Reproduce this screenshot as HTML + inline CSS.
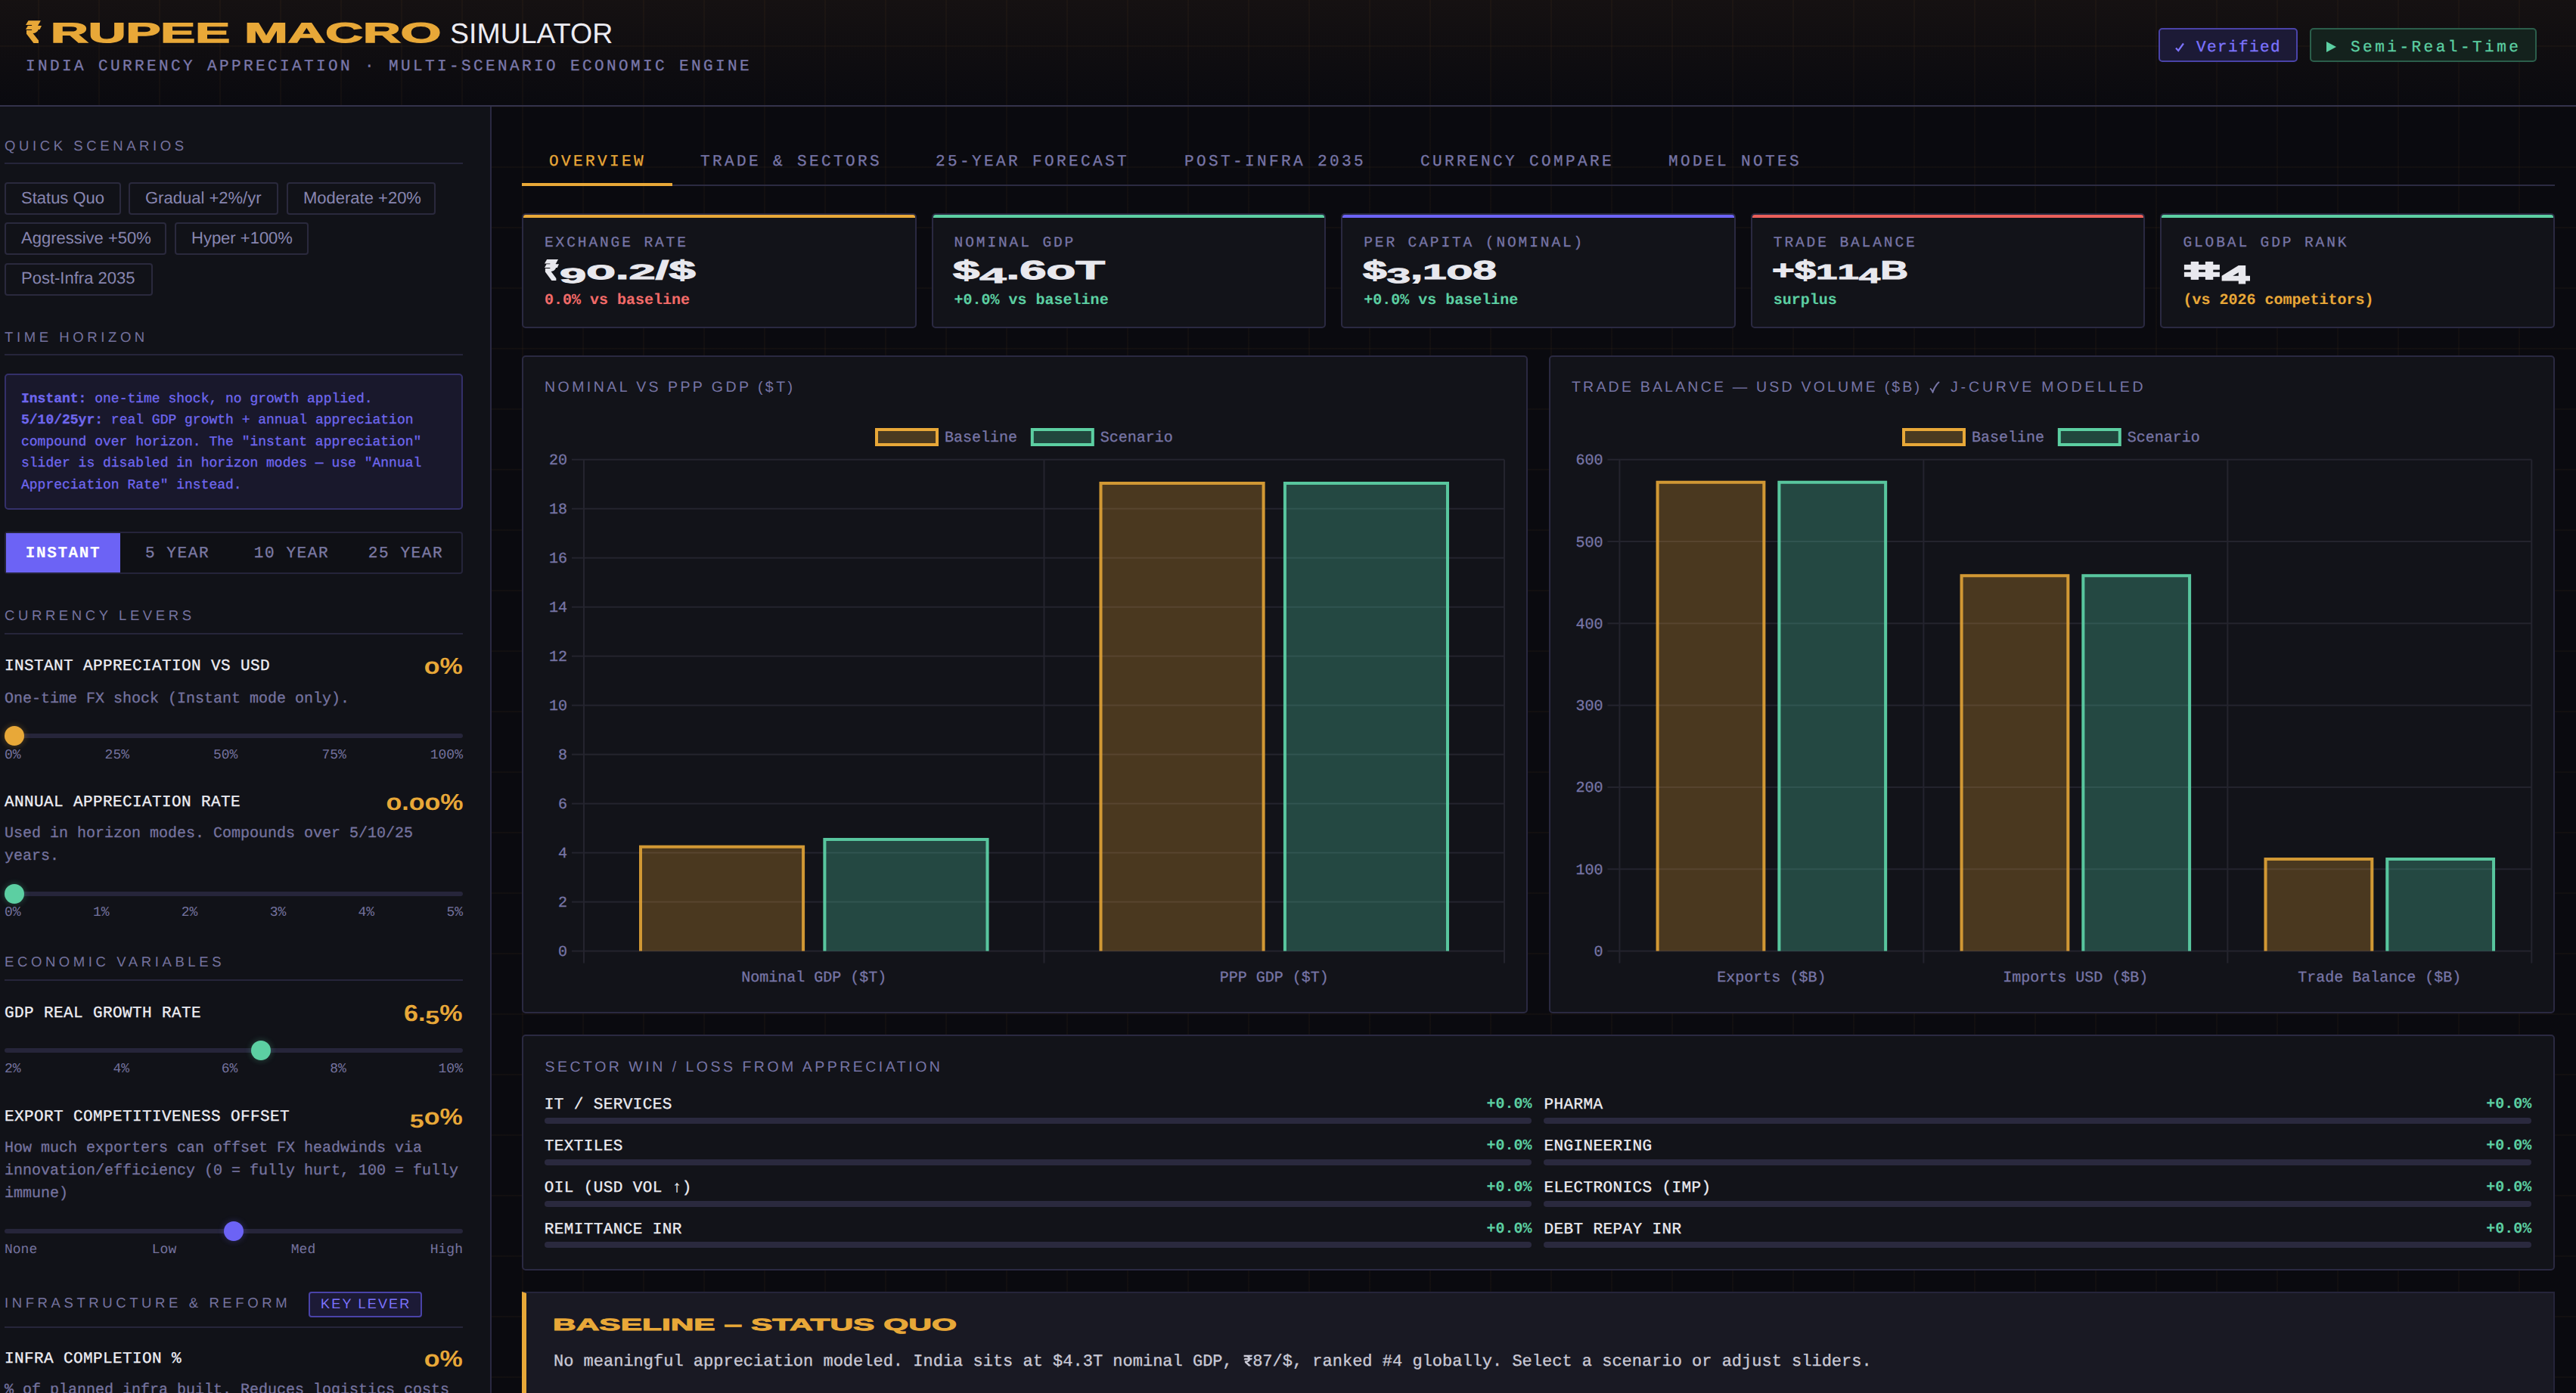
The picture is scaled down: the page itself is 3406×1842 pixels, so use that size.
<!DOCTYPE html>
<html><head><meta charset="utf-8">
<style>
*{box-sizing:border-box;margin:0;padding:0}
html,body{width:3406px;height:1842px;overflow:hidden;text-rendering:geometricPrecision}
body{position:relative;background:#0a0a0f;font-family:"Liberation Mono",monospace;color:#e8e8f0;
background-image:linear-gradient(rgba(232,150,70,0.035) 2px,transparent 2px),linear-gradient(90deg,rgba(232,150,70,0.035) 2px,transparent 2px);
background-size:80px 80px;background-position:0 60px,50px 0}
.abs{position:absolute}
.sans{font-family:"Liberation Sans",sans-serif}
.mono{font-family:"Liberation Mono",monospace}
#hdr{position:absolute;left:0;top:0;width:3406px;height:141px;border-bottom:2px solid #33324b;
background:linear-gradient(180deg,rgba(232,150,70,0.05),rgba(10,10,15,0.0) 100%)}
.disp{font-family:"Liberation Sans",sans-serif;font-weight:700;display:inline-block;transform-origin:0 0;white-space:pre}
.badge{position:absolute;height:45px;border:2px solid;border-radius:5px;font-family:"Liberation Mono",monospace;font-size:20px;white-space:pre}
#side{position:absolute;left:0;top:141px;width:650px;height:1701px;background:#111218;border-right:2px solid #2a2941;overflow:hidden}
.stitle{position:absolute;left:6px;font-family:"Liberation Sans",sans-serif;font-size:18.5px;line-height:20px;letter-spacing:4.6px;color:#75739f;white-space:pre}
.sdiv{position:absolute;left:6px;width:606px;height:2px;background:#26253a}
.sbtn{position:absolute;height:43px;border:2px solid #2a293d;border-radius:4px}
.lbl{position:absolute;left:6px;font-family:"Liberation Mono",monospace;font-size:21px;letter-spacing:0.4px;color:#eeeef4;white-space:pre}
.desc{position:absolute;left:6px;font-family:"Liberation Mono",monospace;font-size:20px;color:#75739f;white-space:pre;line-height:30px}
.track{position:absolute;left:6px;width:606px;height:6px;border-radius:3px;background:#26253a}
.thumb{position:absolute;width:26px;height:26px;border-radius:50%}
.ticks{position:absolute;left:6px;width:606px;display:flex;justify-content:space-between;font-family:"Liberation Mono",monospace;font-size:18px;color:#75739f;line-height:20px}
.tab{position:absolute;top:197px;font-family:"Liberation Mono",monospace;font-size:21px;letter-spacing:3.4px;color:#75739f;white-space:pre;line-height:30px}
.card{position:absolute;top:282px;height:152px;background:#121319;border:2px solid #2a2941;border-radius:5px;overflow:hidden}
.card .bar{position:absolute;left:0;top:0;right:0;height:4px}
.klbl{position:absolute;left:28px;top:24px;font-family:"Liberation Mono",monospace;font-size:20px;letter-spacing:2.7px;color:#75739f;white-space:pre;line-height:30px}
.kval{position:absolute;left:28px;top:56px;color:#e8e8ee}
.ksub{position:absolute;left:28px;top:99px;font-family:"Liberation Mono",monospace;font-size:20px;font-weight:700;white-space:pre;line-height:30px}
.panel{position:absolute;background:#121319;border:2px solid #2a2941;border-radius:5px;overflow:hidden}
.ptitle{position:absolute;left:28px;font-family:"Liberation Sans",sans-serif;font-size:19.5px;line-height:20px;letter-spacing:3.3px;color:#75739f;white-space:pre}

.dg{display:inline-block;line-height:1em;transform-origin:50% 84.65%}
.mono{-webkit-text-stroke:0.3px currentColor}

</style></head><body>
<div id="hdr">
<svg class="abs" style="left:28px;top:22px" width="40" height="40" viewBox="0 0 40 40"><path d="M6.0 11.0L9.5 5.3H25.9L22.6 11.0ZM6.0 17.0L8.8 12.0H27.0L24.6 17.0ZM14.1 10.5H22.3V12.5H14.1ZM7.0 17.9H14.1V16.5H23.0C21.8 20.2 19.0 21.9 15.5 22.1L23.0 31.6V34.9H16.4L7.0 22.7Z" fill="#e8a838"/></svg>
<div class="abs disp" style="left:67px;top:24.17px;font-size:37px;line-height:40px;color:#e8a838;transform:scaleX(1.86);-webkit-text-stroke:1.3px #e8a838;">RUPEE MACRO</div>
<div class="abs sans" style="left:595px;top:23.8px;font-size:37.5px;line-height:40px;letter-spacing:0px;color:#ececf2;font-weight:400;white-space:pre;">SIMULATOR</div>
<div class="abs mono" style="left:34px;top:73.91px;font-size:21px;line-height:30px;letter-spacing:3.4px;color:#7a78aa;font-weight:400;white-space:pre;">INDIA CURRENCY APPRECIATION · MULTI-SCENARIO ECONOMIC ENGINE</div>
<div class="badge" style="left:2854px;top:37px;width:184px;border-color:#4a43a8;background:#1c1a36"><svg class="abs" style="left:20px;top:17px" width="12" height="13" viewBox="0 0 12 13"><path d="M1 7.5L4.2 11L11 1.5" fill="none" stroke="#7d74ff" stroke-width="2.2"/></svg><div class="abs mono" style="left:48px;top:9.91px;font-size:21px;line-height:30px;letter-spacing:1.4px;color:#7d74ff;font-weight:400;white-space:pre;">Verified</div></div>
<div class="badge" style="left:3054px;top:37px;width:300px;border-color:#2b5e4b;background:#14221d"><svg class="abs" style="left:20px;top:16px" width="13" height="14" viewBox="0 0 13 14"><path d="M0 0L13 7L0 14Z" fill="#5ccfa2"/></svg><div class="abs mono" style="left:52px;top:9.91px;font-size:21px;line-height:30px;letter-spacing:3.5px;color:#5ccfa2;font-weight:400;white-space:pre;">Semi-Real-Time</div></div>
</div>
<div id="side"><div class="abs sans" style="left:6px;top:41.59px;font-size:18.5px;line-height:20px;letter-spacing:4.6px;color:#75739f;font-weight:400;white-space:pre;">QUICK SCENARIOS</div>
<div class="sdiv" style="top:74px"></div>
<div class="sbtn" style="left:6px;top:100.0px;width:154px"></div>
<div class="abs sans" style="left:28px;top:105.87px;font-size:22px;line-height:30px;letter-spacing:0px;color:#8886b0;font-weight:400;white-space:pre;">Status Quo</div>
<div class="sbtn" style="left:170px;top:100.0px;width:198px"></div>
<div class="abs sans" style="left:192px;top:105.87px;font-size:22px;line-height:30px;letter-spacing:0px;color:#8886b0;font-weight:400;white-space:pre;">Gradual +2%/yr</div>
<div class="sbtn" style="left:379px;top:100.0px;width:197px"></div>
<div class="abs sans" style="left:401px;top:105.87px;font-size:22px;line-height:30px;letter-spacing:0px;color:#8886b0;font-weight:400;white-space:pre;">Moderate +20%</div>
<div class="sbtn" style="left:6px;top:153.3px;width:214px"></div>
<div class="abs sans" style="left:28px;top:159.17px;font-size:22px;line-height:30px;letter-spacing:0px;color:#8886b0;font-weight:400;white-space:pre;">Aggressive +50%</div>
<div class="sbtn" style="left:231px;top:153.3px;width:177px"></div>
<div class="abs sans" style="left:253px;top:159.17px;font-size:22px;line-height:30px;letter-spacing:0px;color:#8886b0;font-weight:400;white-space:pre;">Hyper +100%</div>
<div class="sbtn" style="left:6px;top:206.60000000000002px;width:196px"></div>
<div class="abs sans" style="left:28px;top:212.47px;font-size:22px;line-height:30px;letter-spacing:0px;color:#8886b0;font-weight:400;white-space:pre;">Post-Infra 2035</div>
<div class="abs sans" style="left:6px;top:294.59px;font-size:18.5px;line-height:20px;letter-spacing:4.6px;color:#75739f;font-weight:400;white-space:pre;">TIME HORIZON</div>
<div class="sdiv" style="top:327px"></div>
<div class="abs" style="left:6px;top:353px;width:606px;height:180px;background:#19182c;border:2px solid #34306a;border-radius:5px"></div>
<div class="abs mono" style="left:28px;top:372.51px;font-size:18px;line-height:28px;letter-spacing:0px;color:#6f67ee;font-weight:400;white-space:pre;"><b>Instant:</b> one-time shock, no growth applied.</div>
<div class="abs mono" style="left:28px;top:401.11px;font-size:18px;line-height:28px;letter-spacing:0px;color:#6f67ee;font-weight:400;white-space:pre;"><b>5/10/25yr:</b> real GDP growth + annual appreciation</div>
<div class="abs mono" style="left:28px;top:429.71px;font-size:18px;line-height:28px;letter-spacing:0px;color:#6f67ee;font-weight:400;white-space:pre;">compound over horizon. The "instant appreciation"</div>
<div class="abs mono" style="left:28px;top:458.31px;font-size:18px;line-height:28px;letter-spacing:0px;color:#6f67ee;font-weight:400;white-space:pre;">slider is disabled in horizon modes — use "Annual</div>
<div class="abs mono" style="left:28px;top:486.91px;font-size:18px;line-height:28px;letter-spacing:0px;color:#6f67ee;font-weight:400;white-space:pre;">Appreciation Rate" instead.</div>
<div class="abs" style="left:6px;top:562px;width:606px;height:56px;border:2px solid #25243a;border-radius:4px;background:#0f1015"></div>
<div class="abs" style="left:8px;top:564px;width:151px;height:52px;background:#6c63f5"></div>
<div class="abs" style="left:-66.5px;width:300px;top:0;text-align:center"><div class="abs mono" style="left:0px;top:577.11px;font-size:21px;line-height:30px;letter-spacing:1.6px;color:#ffffff;font-weight:700;white-space:pre;-webkit-text-stroke:0.1px currentColor;position:relative;left:0;text-align:center">INSTANT</div></div>
<div class="abs" style="left:84.5px;width:300px;top:0;text-align:center"><div class="abs mono" style="left:0px;top:577.11px;font-size:21px;line-height:30px;letter-spacing:1.6px;color:#7c7aa4;font-weight:400;white-space:pre;position:relative;left:0;text-align:center">5 YEAR</div></div>
<div class="abs" style="left:235.5px;width:300px;top:0;text-align:center"><div class="abs mono" style="left:0px;top:577.11px;font-size:21px;line-height:30px;letter-spacing:1.6px;color:#7c7aa4;font-weight:400;white-space:pre;position:relative;left:0;text-align:center">10 YEAR</div></div>
<div class="abs" style="left:386.5px;width:300px;top:0;text-align:center"><div class="abs mono" style="left:0px;top:577.11px;font-size:21px;line-height:30px;letter-spacing:1.6px;color:#7c7aa4;font-weight:400;white-space:pre;position:relative;left:0;text-align:center">25 YEAR</div></div>
<div class="abs sans" style="left:6px;top:663.19px;font-size:18.5px;line-height:20px;letter-spacing:4.6px;color:#75739f;font-weight:400;white-space:pre;">CURRENCY LEVERS</div>
<div class="sdiv" style="top:696px"></div>
<div class="abs mono" style="left:6px;top:726.41px;font-size:21px;line-height:30px;letter-spacing:0.4px;color:#eeeef4;font-weight:400;white-space:pre;">INSTANT APPRECIATION VS USD</div>
<div class="abs disp" style="right:36px;top:720.43px;font-size:30.5px;line-height:40px;color:#e8a838;transform-origin:100% 0;transform:scaleX(1.115);">o%</div>
<div class="abs mono" style="left:6px;top:768.68px;font-size:20px;line-height:30px;letter-spacing:0px;color:#75739f;font-weight:400;white-space:pre;">One-time FX shock (Instant mode only).</div>
<div class="track" style="top:829px"></div>
<div class="thumb" style="left:6px;top:819px;background:#e8a838;box-shadow:0 0 8px #e8a83855"></div>
<div class="ticks" style="top:848.01px"><span>0%</span><span>25%</span><span>50%</span><span>75%</span><span>100%</span></div>
<div class="abs mono" style="left:6px;top:905.61px;font-size:21px;line-height:30px;letter-spacing:0.4px;color:#eeeef4;font-weight:400;white-space:pre;">ANNUAL APPRECIATION RATE</div>
<div class="abs disp" style="right:36px;top:899.83px;font-size:30.5px;line-height:40px;color:#e8a838;transform-origin:100% 0;transform:scaleX(1.115);">o.oo%</div>
<div class="abs mono" style="left:6px;top:946.68px;font-size:20px;line-height:30px;letter-spacing:0px;color:#75739f;font-weight:400;white-space:pre;">Used in horizon modes. Compounds over 5/10/25</div>
<div class="abs mono" style="left:6px;top:976.68px;font-size:20px;line-height:30px;letter-spacing:0px;color:#75739f;font-weight:400;white-space:pre;">years.</div>
<div class="track" style="top:1038px"></div>
<div class="thumb" style="left:6px;top:1028px;background:#5ccfa2;box-shadow:0 0 8px #5ccfa255"></div>
<div class="ticks" style="top:1056.21px"><span>0%</span><span>1%</span><span>2%</span><span>3%</span><span>4%</span><span>5%</span></div>
<div class="abs sans" style="left:6px;top:1120.79px;font-size:18.5px;line-height:20px;letter-spacing:4.6px;color:#75739f;font-weight:400;white-space:pre;">ECONOMIC VARIABLES</div>
<div class="sdiv" style="top:1154px"></div>
<div class="abs mono" style="left:6px;top:1184.91px;font-size:21px;line-height:30px;letter-spacing:0.4px;color:#eeeef4;font-weight:400;white-space:pre;">GDP REAL GROWTH RATE</div>
<div class="abs disp" style="right:36px;top:1179.43px;font-size:30.5px;line-height:40px;color:#e8a838;transform-origin:100% 0;transform:scaleX(1.115);">6.<span class="dg" style="transform:translateY(0.14em) scaleY(0.82)">5</span>%</div>
<div class="track" style="top:1245px"></div>
<div class="thumb" style="left:331.5px;top:1235px;background:#5ccfa2;box-shadow:0 0 8px #5ccfa255"></div>
<div class="ticks" style="top:1263.21px"><span>2%</span><span>4%</span><span>6%</span><span>8%</span><span>10%</span></div>
<div class="abs mono" style="left:6px;top:1321.71px;font-size:21px;line-height:30px;letter-spacing:0.4px;color:#eeeef4;font-weight:400;white-space:pre;">EXPORT COMPETITIVENESS OFFSET</div>
<div class="abs disp" style="right:36px;top:1315.93px;font-size:30.5px;line-height:40px;color:#e8a838;transform-origin:100% 0;transform:scaleX(1.115);"><span class="dg" style="transform:translateY(0.14em) scaleY(0.82)">5</span>o%</div>
<div class="abs mono" style="left:6px;top:1362.78px;font-size:20px;line-height:30px;letter-spacing:0px;color:#75739f;font-weight:400;white-space:pre;">How much exporters can offset FX headwinds via</div>
<div class="abs mono" style="left:6px;top:1392.78px;font-size:20px;line-height:30px;letter-spacing:0px;color:#75739f;font-weight:400;white-space:pre;">innovation/efficiency (0 = fully hurt, 100 = fully</div>
<div class="abs mono" style="left:6px;top:1422.78px;font-size:20px;line-height:30px;letter-spacing:0px;color:#75739f;font-weight:400;white-space:pre;">immune)</div>
<div class="track" style="top:1484px"></div>
<div class="thumb" style="left:296px;top:1474px;background:#6c63f5;box-shadow:0 0 8px #6c63f555"></div>
<div class="ticks" style="top:1502.21px"><span>None</span><span>Low</span><span>Med</span><span>High</span></div>
<div class="abs sans" style="left:6px;top:1571.59px;font-size:18.5px;line-height:20px;letter-spacing:4.6px;color:#75739f;font-weight:400;white-space:pre;">INFRASTRUCTURE &amp; REFORM</div>
<div class="abs" style="left:408px;top:1567px;width:150px;height:34px;border:2px solid #4a43a8;border-radius:4px;background:#1c1a36"></div>
<div class="abs sans" style="left:424px;top:1572.76px;font-size:18px;line-height:20px;letter-spacing:2.2px;color:#7d74ff;font-weight:400;white-space:pre;">KEY LEVER</div>
<div class="sdiv" style="top:1612.5px"></div>
<div class="abs mono" style="left:6px;top:1642.41px;font-size:21px;line-height:30px;letter-spacing:0.4px;color:#eeeef4;font-weight:400;white-space:pre;">INFRA COMPLETION %</div>
<div class="abs disp" style="right:36px;top:1636.23px;font-size:30.5px;line-height:40px;color:#e8a838;transform-origin:100% 0;transform:scaleX(1.115);">o%</div>
<div class="abs mono" style="left:6px;top:1682.68px;font-size:20px;line-height:30px;letter-spacing:0px;color:#75739f;font-weight:400;white-space:pre;">% of planned infra built. Reduces logistics costs</div></div>
<div class="abs mono" style="left:726px;top:199.91px;font-size:21px;line-height:30px;letter-spacing:3.4px;color:#e8a838;font-weight:400;white-space:pre;">OVERVIEW</div>
<div class="abs mono" style="left:926px;top:199.91px;font-size:21px;line-height:30px;letter-spacing:3.4px;color:#7775a6;font-weight:400;white-space:pre;">TRADE &amp; SECTORS</div>
<div class="abs mono" style="left:1237px;top:199.91px;font-size:21px;line-height:30px;letter-spacing:3.4px;color:#7775a6;font-weight:400;white-space:pre;">25-YEAR FORECAST</div>
<div class="abs mono" style="left:1566px;top:199.91px;font-size:21px;line-height:30px;letter-spacing:3.4px;color:#7775a6;font-weight:400;white-space:pre;">POST-INFRA 2035</div>
<div class="abs mono" style="left:1878px;top:199.91px;font-size:21px;line-height:30px;letter-spacing:3.4px;color:#7775a6;font-weight:400;white-space:pre;">CURRENCY COMPARE</div>
<div class="abs mono" style="left:2206px;top:199.91px;font-size:21px;line-height:30px;letter-spacing:3.4px;color:#7775a6;font-weight:400;white-space:pre;">MODEL NOTES</div>
<div class="abs" style="left:690px;top:244px;width:2688px;height:2px;background:#2c2b42"></div>
<div class="abs" style="left:690px;top:242px;width:199px;height:4px;background:#e8a838"></div>
<div class="card" style="left:690px;width:521.5999999999999px"><div class="bar" style="background:#e8a838"></div><div class="abs mono" style="left:28px;top:21.61px;font-size:19.5px;line-height:30px;letter-spacing:2.9px;color:#7775a6;font-weight:400;white-space:pre;">EXCHANGE RATE</div><div class="abs disp" style="left:47.5px;top:54.24px;font-size:34.5px;line-height:40px;color:#e8e8ee;transform:scaleX(1.837);-webkit-text-stroke:1.1px #e8e8ee;"><span class="dg" style="transform:translateY(0.15em) scaleY(0.8)">9</span>o.<span class="dg" style="transform:scaleY(0.8)">2</span>/$</div><div class="abs mono" style="left:28px;top:98.68px;font-size:20px;line-height:30px;letter-spacing:0px;color:#f26b69;font-weight:700;white-space:pre;-webkit-text-stroke:0.1px currentColor;">0.0% vs baseline</div><svg class="abs" style="left:28.200000000000045px;top:59px" width="19" height="28" viewBox="6 5.3 21 29.6" preserveAspectRatio="none"><path d="M6.0 11.0L9.5 5.3H25.9L22.6 11.0ZM6.0 17.0L8.8 12.0H27.0L24.6 17.0ZM14.1 10.5H22.3V12.5H14.1ZM7.0 17.9H14.1V16.5H23.0C21.8 20.2 19.0 21.9 15.5 22.1L23.0 31.6V34.9H16.4L7.0 22.7Z" fill="#e8e8ee"/></svg></div>
<div class="card" style="left:1231.6px;width:521.6000000000001px"><div class="bar" style="background:#5ccfa2"></div><div class="abs mono" style="left:28px;top:21.61px;font-size:19.5px;line-height:30px;letter-spacing:2.9px;color:#7775a6;font-weight:400;white-space:pre;">NOMINAL GDP</div><div class="abs disp" style="left:26.90000000000009px;top:54.24px;font-size:34.5px;line-height:40px;color:#e8e8ee;transform:scaleX(1.839);-webkit-text-stroke:1.1px #e8e8ee;">$<span class="dg" style="transform:translateY(0.15em) scaleY(0.8)">4</span>.6oT</div><div class="abs mono" style="left:28px;top:98.68px;font-size:20px;line-height:30px;letter-spacing:0px;color:#5ccfa2;font-weight:700;white-space:pre;-webkit-text-stroke:0.1px currentColor;">+0.0% vs baseline</div></div>
<div class="card" style="left:1773.2px;width:521.6000000000001px"><div class="bar" style="background:#6c63f5"></div><div class="abs mono" style="left:28px;top:21.61px;font-size:19.5px;line-height:30px;letter-spacing:2.9px;color:#7775a6;font-weight:400;white-space:pre;">PER CAPITA (NOMINAL)</div><div class="abs disp" style="left:27.299999999999955px;top:54.24px;font-size:34.5px;line-height:40px;color:#e8e8ee;transform:scaleX(1.646);-webkit-text-stroke:1.1px #e8e8ee;">$<span class="dg" style="transform:translateY(0.15em) scaleY(0.8)">3</span>,<span class="dg" style="transform:scaleY(0.8)">1</span>o8</div><div class="abs mono" style="left:28px;top:98.68px;font-size:20px;line-height:30px;letter-spacing:0px;color:#5ccfa2;font-weight:700;white-space:pre;-webkit-text-stroke:0.1px currentColor;">+0.0% vs baseline</div></div>
<div class="card" style="left:2314.8px;width:521.5999999999999px"><div class="bar" style="background:#ea5f5a"></div><div class="abs mono" style="left:28px;top:21.61px;font-size:19.5px;line-height:30px;letter-spacing:2.9px;color:#7775a6;font-weight:400;white-space:pre;">TRADE BALANCE</div><div class="abs disp" style="left:26.699999999999818px;top:54.24px;font-size:34.5px;line-height:40px;color:#e8e8ee;transform:scaleX(1.477);-webkit-text-stroke:1.1px #e8e8ee;">+$<span class="dg" style="transform:scaleY(0.8)">1</span><span class="dg" style="transform:scaleY(0.8)">1</span><span class="dg" style="transform:translateY(0.15em) scaleY(0.8)">4</span>B</div><div class="abs mono" style="left:28px;top:98.68px;font-size:20px;line-height:30px;letter-spacing:0px;color:#5ccfa2;font-weight:700;white-space:pre;-webkit-text-stroke:0.1px currentColor;">surplus</div></div>
<div class="card" style="left:2856.4px;width:521.5999999999999px"><div class="bar" style="background:#5ccfa2"></div><div class="abs mono" style="left:28px;top:21.61px;font-size:19.5px;line-height:30px;letter-spacing:2.9px;color:#7775a6;font-weight:400;white-space:pre;">GLOBAL GDP RANK</div><svg class="abs" style="left:21.59999999999991px;top:56px" width="100" height="40" viewBox="2880 340 100 40"><g fill="#e8e8ee"><rect x="2896.7" y="345.9" width="10.4" height="24"/><rect x="2915.9" y="345.9" width="10.4" height="24"/><rect x="2887.9" y="349.9" width="47" height="6.8"/><rect x="2887.9" y="359.8" width="47" height="6.3"/><path fill-rule="evenodd" d="M2937.6 364.8L2959.8 350.9H2969.2V364.8H2975V371.6H2969.2V375.4H2959.8V371.6H2937.6ZM2952.3 364.8L2959.8 360.3V364.8Z"/></g></svg><div class="abs mono" style="left:28px;top:98.68px;font-size:20px;line-height:30px;letter-spacing:0px;color:#e8a838;font-weight:700;white-space:pre;-webkit-text-stroke:0.1px currentColor;">(vs 2026 competitors)</div></div>
<div class="panel" style="left:690px;top:470px;width:1330px;height:870px">
<div class="abs sans" style="left:28px;top:30.44px;font-size:19.5px;line-height:20px;letter-spacing:3.45px;color:#7775a6;font-weight:400;white-space:pre;">NOMINAL VS PPP GDP ($T)</div>
<svg class="abs" style="left:-2px;top:-2px" width="1330" height="870" viewBox="690 470 1330 870">
<rect x="756" y="1256.6" width="1233" height="2" fill="#24242e"/>
<text x="750" y="1264.1" text-anchor="end" font-family="Liberation Mono" font-size="20" fill="#7775a6" stroke="#7775a6" stroke-width="0.3">0</text>
<rect x="756" y="1191.61" width="1233" height="2" fill="#24242e"/>
<text x="750" y="1199.11" text-anchor="end" font-family="Liberation Mono" font-size="20" fill="#7775a6" stroke="#7775a6" stroke-width="0.3">2</text>
<rect x="756" y="1126.62" width="1233" height="2" fill="#24242e"/>
<text x="750" y="1134.12" text-anchor="end" font-family="Liberation Mono" font-size="20" fill="#7775a6" stroke="#7775a6" stroke-width="0.3">4</text>
<rect x="756" y="1061.6299999999999" width="1233" height="2" fill="#24242e"/>
<text x="750" y="1069.1299999999999" text-anchor="end" font-family="Liberation Mono" font-size="20" fill="#7775a6" stroke="#7775a6" stroke-width="0.3">6</text>
<rect x="756" y="996.64" width="1233" height="2" fill="#24242e"/>
<text x="750" y="1004.14" text-anchor="end" font-family="Liberation Mono" font-size="20" fill="#7775a6" stroke="#7775a6" stroke-width="0.3">8</text>
<rect x="756" y="931.65" width="1233" height="2" fill="#24242e"/>
<text x="750" y="939.15" text-anchor="end" font-family="Liberation Mono" font-size="20" fill="#7775a6" stroke="#7775a6" stroke-width="0.3">10</text>
<rect x="756" y="866.66" width="1233" height="2" fill="#24242e"/>
<text x="750" y="874.16" text-anchor="end" font-family="Liberation Mono" font-size="20" fill="#7775a6" stroke="#7775a6" stroke-width="0.3">12</text>
<rect x="756" y="801.67" width="1233" height="2" fill="#24242e"/>
<text x="750" y="809.17" text-anchor="end" font-family="Liberation Mono" font-size="20" fill="#7775a6" stroke="#7775a6" stroke-width="0.3">14</text>
<rect x="756" y="736.6800000000001" width="1233" height="2" fill="#24242e"/>
<text x="750" y="744.1800000000001" text-anchor="end" font-family="Liberation Mono" font-size="20" fill="#7775a6" stroke="#7775a6" stroke-width="0.3">16</text>
<rect x="756" y="671.69" width="1233" height="2" fill="#24242e"/>
<text x="750" y="679.19" text-anchor="end" font-family="Liberation Mono" font-size="20" fill="#7775a6" stroke="#7775a6" stroke-width="0.3">18</text>
<rect x="756" y="606.7" width="1233" height="2" fill="#24242e"/>
<text x="750" y="614.2" text-anchor="end" font-family="Liberation Mono" font-size="20" fill="#7775a6" stroke="#7775a6" stroke-width="0.3">20</text>
<rect x="771.0" y="607.7" width="2" height="665.8999999999999" fill="#24242e"/>
<rect x="1379.5" y="607.7" width="2" height="665.8999999999999" fill="#24242e"/>
<rect x="1988.0" y="607.7" width="2" height="665.8999999999999" fill="#24242e"/>
<text x="1076.25" y="1298.2" text-anchor="middle" font-family="Liberation Mono" font-size="20" fill="#7775a6" stroke="#7775a6" stroke-width="0.3">Nominal GDP ($T)</text>
<rect x="845.02" y="1117.8715" width="219.06" height="139.72849999999994" fill="rgba(242,167,53,0.25)"/>
<path d="M847.02 1257.6V1119.8715H1062.08V1257.6" fill="none" stroke="rgba(232,168,56,0.86)" stroke-width="4"/>
<rect x="1088.42" y="1108.123" width="219.06" height="149.47699999999986" fill="rgba(82,212,171,0.28)"/>
<path d="M1090.42 1257.6V1110.123H1305.48V1257.6" fill="none" stroke="rgba(94,212,168,0.9)" stroke-width="4"/>
<text x="1684.75" y="1298.2" text-anchor="middle" font-family="Liberation Mono" font-size="20" fill="#7775a6" stroke="#7775a6" stroke-width="0.3">PPP GDP ($T)</text>
<rect x="1453.52" y="636.9455" width="219.06" height="620.6544999999999" fill="rgba(242,167,53,0.25)"/>
<path d="M1455.52 1257.6V638.9455H1670.58V1257.6" fill="none" stroke="rgba(232,168,56,0.86)" stroke-width="4"/>
<rect x="1696.92" y="636.9455" width="219.06" height="620.6544999999999" fill="rgba(82,212,171,0.28)"/>
<path d="M1698.92 1257.6V638.9455H1913.98V1257.6" fill="none" stroke="rgba(94,212,168,0.9)" stroke-width="4"/>
<rect x="1159" y="568" width="80" height="20" fill="#4a3a20" stroke="#e8a838" stroke-width="4"/>
<text x="1249" y="584.4" font-family="Liberation Mono" font-size="20" fill="#7775a6" stroke="#7775a6" stroke-width="0.3">Baseline</text>
<rect x="1364.8" y="568" width="80" height="20" fill="#21463d" stroke="#5ccfa2" stroke-width="4"/>
<text x="1454.8" y="584.4" font-family="Liberation Mono" font-size="20" fill="#7775a6" stroke="#7775a6" stroke-width="0.3">Scenario</text>
</svg>
</div>
<div class="panel" style="left:2048px;top:470px;width:1330px;height:870px">
<div class="abs sans" style="left:28px;top:30.44px;font-size:19.5px;line-height:20px;letter-spacing:3.2px;color:#7775a6;font-weight:400;white-space:pre;">TRADE BALANCE — USD VOLUME ($B)</div>
<div class="abs sans" style="left:529px;top:30.44px;font-size:19.5px;line-height:20px;letter-spacing:3.85px;color:#7775a6;font-weight:400;white-space:pre;">J-CURVE MODELLED</div>
<svg class="abs" style="left:-2px;top:-2px" width="1330" height="870" viewBox="2048 470 1330 870">
<rect x="2125.4" y="1256.6" width="1221.9" height="2" fill="#24242e"/>
<text x="2119.4" y="1264.1" text-anchor="end" font-family="Liberation Mono" font-size="20" fill="#7775a6" stroke="#7775a6" stroke-width="0.3">0</text>
<rect x="2125.4" y="1148.2833333333333" width="1221.9" height="2" fill="#24242e"/>
<text x="2119.4" y="1155.7833333333333" text-anchor="end" font-family="Liberation Mono" font-size="20" fill="#7775a6" stroke="#7775a6" stroke-width="0.3">100</text>
<rect x="2125.4" y="1039.9666666666667" width="1221.9" height="2" fill="#24242e"/>
<text x="2119.4" y="1047.4666666666667" text-anchor="end" font-family="Liberation Mono" font-size="20" fill="#7775a6" stroke="#7775a6" stroke-width="0.3">200</text>
<rect x="2125.4" y="931.65" width="1221.9" height="2" fill="#24242e"/>
<text x="2119.4" y="939.15" text-anchor="end" font-family="Liberation Mono" font-size="20" fill="#7775a6" stroke="#7775a6" stroke-width="0.3">300</text>
<rect x="2125.4" y="823.3333333333333" width="1221.9" height="2" fill="#24242e"/>
<text x="2119.4" y="830.8333333333333" text-anchor="end" font-family="Liberation Mono" font-size="20" fill="#7775a6" stroke="#7775a6" stroke-width="0.3">400</text>
<rect x="2125.4" y="715.0166666666668" width="1221.9" height="2" fill="#24242e"/>
<text x="2119.4" y="722.5166666666668" text-anchor="end" font-family="Liberation Mono" font-size="20" fill="#7775a6" stroke="#7775a6" stroke-width="0.3">500</text>
<rect x="2125.4" y="606.7" width="1221.9" height="2" fill="#24242e"/>
<text x="2119.4" y="614.2" text-anchor="end" font-family="Liberation Mono" font-size="20" fill="#7775a6" stroke="#7775a6" stroke-width="0.3">600</text>
<rect x="2140.4" y="607.7" width="2" height="665.8999999999999" fill="#24242e"/>
<rect x="2542.366666666667" y="607.7" width="2" height="665.8999999999999" fill="#24242e"/>
<rect x="2944.3333333333335" y="607.7" width="2" height="665.8999999999999" fill="#24242e"/>
<rect x="3346.3" y="607.7" width="2" height="665.8999999999999" fill="#24242e"/>
<text x="2342.383333333333" y="1298.2" text-anchor="middle" font-family="Liberation Mono" font-size="20" fill="#7775a6" stroke="#7775a6" stroke-width="0.3">Exports ($B)</text>
<rect x="2189.636" y="635.8623333333334" width="144.70800000000003" height="621.7376666666665" fill="rgba(242,167,53,0.25)"/>
<path d="M2191.636 1257.6V637.8623333333334H2332.344V1257.6" fill="none" stroke="rgba(232,168,56,0.86)" stroke-width="4"/>
<rect x="2350.422666666667" y="635.8623333333334" width="144.70800000000003" height="621.7376666666665" fill="rgba(82,212,171,0.28)"/>
<path d="M2352.422666666667 1257.6V637.8623333333334H2493.130666666667V1257.6" fill="none" stroke="rgba(94,212,168,0.9)" stroke-width="4"/>
<text x="2744.3500000000004" y="1298.2" text-anchor="middle" font-family="Liberation Mono" font-size="20" fill="#7775a6" stroke="#7775a6" stroke-width="0.3">Imports USD ($B)</text>
<rect x="2591.6026666666667" y="759.3433333333334" width="144.70800000000003" height="498.25666666666655" fill="rgba(242,167,53,0.25)"/>
<path d="M2593.6026666666667 1257.6V761.3433333333334H2734.3106666666667V1257.6" fill="none" stroke="rgba(232,168,56,0.86)" stroke-width="4"/>
<rect x="2752.3893333333335" y="759.3433333333334" width="144.70800000000003" height="498.25666666666655" fill="rgba(82,212,171,0.28)"/>
<path d="M2754.3893333333335 1257.6V761.3433333333334H2895.0973333333336V1257.6" fill="none" stroke="rgba(94,212,168,0.9)" stroke-width="4"/>
<text x="3146.3166666666666" y="1298.2" text-anchor="middle" font-family="Liberation Mono" font-size="20" fill="#7775a6" stroke="#7775a6" stroke-width="0.3">Trade Balance ($B)</text>
<rect x="2993.5693333333334" y="1134.119" width="144.70800000000003" height="123.481" fill="rgba(242,167,53,0.25)"/>
<path d="M2995.5693333333334 1257.6V1136.119H3136.2773333333334V1257.6" fill="none" stroke="rgba(232,168,56,0.86)" stroke-width="4"/>
<rect x="3154.356" y="1134.119" width="144.70800000000003" height="123.481" fill="rgba(82,212,171,0.28)"/>
<path d="M3156.356 1257.6V1136.119H3297.0640000000003V1257.6" fill="none" stroke="rgba(94,212,168,0.9)" stroke-width="4"/>
<rect x="2517" y="568" width="80" height="20" fill="#4a3a20" stroke="#e8a838" stroke-width="4"/>
<text x="2607" y="584.4" font-family="Liberation Mono" font-size="20" fill="#7775a6" stroke="#7775a6" stroke-width="0.3">Baseline</text>
<rect x="2722.8" y="568" width="80" height="20" fill="#21463d" stroke="#5ccfa2" stroke-width="4"/>
<text x="2812.8" y="584.4" font-family="Liberation Mono" font-size="20" fill="#7775a6" stroke="#7775a6" stroke-width="0.3">Scenario</text>
</svg>
<svg class="abs" style="left:501px;top:32px" width="14" height="16" viewBox="0 0 14 16"><path d="M1 9.5C2.5 10.5 3.5 12 4.5 14.5C6.5 8.5 9.5 4 13 1" fill="none" stroke="#7775a6" stroke-width="2"/></svg>
</div>
<div class="panel" style="left:690px;top:1368px;width:2688px;height:312px">
<div class="abs sans" style="left:28.5px;top:30.84px;font-size:19.5px;line-height:20px;letter-spacing:3.5px;color:#7775a6;font-weight:400;white-space:pre;">SECTOR WIN / LOSS FROM APPRECIATION</div>
<div class="abs mono" style="left:27.7px;top:77.11px;font-size:21px;line-height:30px;letter-spacing:0.4px;color:#ececf2;font-weight:400;white-space:pre;">IT / SERVICES</div>
<div class="abs" style="left:27.7px;width:1305.8px;top:0;height:0"><div class="abs mono" style="left:0px;top:76.18px;font-size:20px;line-height:30px;letter-spacing:0px;color:#5ccfa2;font-weight:700;white-space:pre;-webkit-text-stroke:0.1px currentColor;left:auto;right:0">+0.0%</div></div>
<div class="abs" style="left:27.7px;top:108.0px;width:1305.8px;height:8px;border-radius:4px;background:#2a293e"></div>
<div class="abs mono" style="left:1349.4px;top:77.11px;font-size:21px;line-height:30px;letter-spacing:0.4px;color:#ececf2;font-weight:400;white-space:pre;">PHARMA</div>
<div class="abs" style="left:1349.4px;width:1305.8px;top:0;height:0"><div class="abs mono" style="left:0px;top:76.18px;font-size:20px;line-height:30px;letter-spacing:0px;color:#5ccfa2;font-weight:700;white-space:pre;-webkit-text-stroke:0.1px currentColor;left:auto;right:0">+0.0%</div></div>
<div class="abs" style="left:1349.4px;top:108.0px;width:1305.8px;height:8px;border-radius:4px;background:#2a293e"></div>
<div class="abs mono" style="left:27.7px;top:131.91px;font-size:21px;line-height:30px;letter-spacing:0.4px;color:#ececf2;font-weight:400;white-space:pre;">TEXTILES</div>
<div class="abs" style="left:27.7px;width:1305.8px;top:0;height:0"><div class="abs mono" style="left:0px;top:130.98px;font-size:20px;line-height:30px;letter-spacing:0px;color:#5ccfa2;font-weight:700;white-space:pre;-webkit-text-stroke:0.1px currentColor;left:auto;right:0">+0.0%</div></div>
<div class="abs" style="left:27.7px;top:162.79999999999995px;width:1305.8px;height:8px;border-radius:4px;background:#2a293e"></div>
<div class="abs mono" style="left:1349.4px;top:131.91px;font-size:21px;line-height:30px;letter-spacing:0.4px;color:#ececf2;font-weight:400;white-space:pre;">ENGINEERING</div>
<div class="abs" style="left:1349.4px;width:1305.8px;top:0;height:0"><div class="abs mono" style="left:0px;top:130.98px;font-size:20px;line-height:30px;letter-spacing:0px;color:#5ccfa2;font-weight:700;white-space:pre;-webkit-text-stroke:0.1px currentColor;left:auto;right:0">+0.0%</div></div>
<div class="abs" style="left:1349.4px;top:162.79999999999995px;width:1305.8px;height:8px;border-radius:4px;background:#2a293e"></div>
<div class="abs mono" style="left:27.7px;top:186.71px;font-size:21px;line-height:30px;letter-spacing:0.4px;color:#ececf2;font-weight:400;white-space:pre;">OIL (USD VOL ↑)</div>
<div class="abs" style="left:27.7px;width:1305.8px;top:0;height:0"><div class="abs mono" style="left:0px;top:185.78px;font-size:20px;line-height:30px;letter-spacing:0px;color:#5ccfa2;font-weight:700;white-space:pre;-webkit-text-stroke:0.1px currentColor;left:auto;right:0">+0.0%</div></div>
<div class="abs" style="left:27.7px;top:217.5999999999999px;width:1305.8px;height:8px;border-radius:4px;background:#2a293e"></div>
<div class="abs mono" style="left:1349.4px;top:186.71px;font-size:21px;line-height:30px;letter-spacing:0.4px;color:#ececf2;font-weight:400;white-space:pre;">ELECTRONICS (IMP)</div>
<div class="abs" style="left:1349.4px;width:1305.8px;top:0;height:0"><div class="abs mono" style="left:0px;top:185.78px;font-size:20px;line-height:30px;letter-spacing:0px;color:#5ccfa2;font-weight:700;white-space:pre;-webkit-text-stroke:0.1px currentColor;left:auto;right:0">+0.0%</div></div>
<div class="abs" style="left:1349.4px;top:217.5999999999999px;width:1305.8px;height:8px;border-radius:4px;background:#2a293e"></div>
<div class="abs mono" style="left:27.7px;top:241.51px;font-size:21px;line-height:30px;letter-spacing:0.4px;color:#ececf2;font-weight:400;white-space:pre;">REMITTANCE INR</div>
<div class="abs" style="left:27.7px;width:1305.8px;top:0;height:0"><div class="abs mono" style="left:0px;top:240.58px;font-size:20px;line-height:30px;letter-spacing:0px;color:#5ccfa2;font-weight:700;white-space:pre;-webkit-text-stroke:0.1px currentColor;left:auto;right:0">+0.0%</div></div>
<div class="abs" style="left:27.7px;top:272.4000000000001px;width:1305.8px;height:8px;border-radius:4px;background:#2a293e"></div>
<div class="abs mono" style="left:1349.4px;top:241.51px;font-size:21px;line-height:30px;letter-spacing:0.4px;color:#ececf2;font-weight:400;white-space:pre;">DEBT REPAY INR</div>
<div class="abs" style="left:1349.4px;width:1305.8px;top:0;height:0"><div class="abs mono" style="left:0px;top:240.58px;font-size:20px;line-height:30px;letter-spacing:0px;color:#5ccfa2;font-weight:700;white-space:pre;-webkit-text-stroke:0.1px currentColor;left:auto;right:0">+0.0%</div></div>
<div class="abs" style="left:1349.4px;top:272.4000000000001px;width:1305.8px;height:8px;border-radius:4px;background:#2a293e"></div>
</div>
<div class="abs" style="left:690px;top:1708px;width:2688px;height:200px;background:#191923;border-top:2px solid #25243a;border-right:2px solid #25243a;border-left:6px solid #e8a838"></div>
<div class="abs disp" style="left:731px;top:1732.27px;font-size:22px;line-height:40px;color:#e8a838;transform:scaleX(1.93);-webkit-text-stroke:0.9px #e8a838;">BASELINE – STATUS QUO</div>
<div class="abs mono" style="left:732px;top:1785.75px;font-size:22px;line-height:30px;letter-spacing:0px;color:#c9c9d6;font-weight:400;white-space:pre;">No meaningful appreciation modeled. India sits at $4.3T nominal GDP, <span style="display:inline-block;width:13.2px"></span>87/$, ranked #4 globally. Select a scenario or adjust sliders.</div>
<svg class="abs" style="left:1643.5px;top:1791px" width="12.5" height="16" viewBox="0 0 24 31"><path d="M1 1.5H23L21.2 6.2H15.5C16.6 7.3 17.2 8.4 17.5 9.6H23L21.2 14.1H17.4C16.6 17.6 13.9 19.6 9.6 19.9L20.6 30H13.4L3.5 20.6V16.3H8C10.3 16.3 11.5 15.7 12 14.1H1L2.8 9.6H11.8C11.3 8.6 10.3 6.2 7.9 6.2H1Z" fill="#c9c9d6"/></svg>
</body></html>
